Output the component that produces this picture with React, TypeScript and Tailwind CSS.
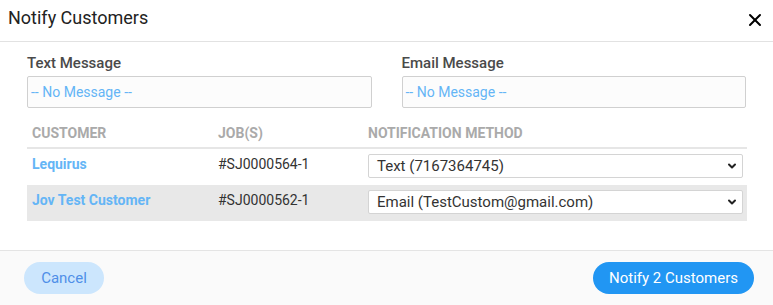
import { X, ChevronDown } from "lucide-react";

interface Row {
  customer: string;
  job: string;
  method: string;
}

const rows: Row[] = [
  { customer: "Lequirus", job: "#SJ0000564-1", method: "Text (7167364745)" },
  { customer: "Jov Test Customer", job: "#SJ0000562-1", method: "Email (TestCustom@gmail.com)" },
];

function MessageField({ label }: { label: string }) {
  return (
    <div className="flex flex-col">
      <span className="text-[15px] leading-[20px] font-medium text-[#4a4a4a]">{label}</span>
      <div className="mt-[3px] h-[32px] rounded-[2px] border border-[#d0d0d0] bg-[#fcfcfc] px-[3px] flex items-center text-[14px] text-[#64b5f6]">
        -- No Message --
      </div>
    </div>
  );
}

export default function App() {
  return (
    <div className="w-[773px] h-[305px] bg-white flex flex-col font-['Roboto',sans-serif] text-[#333]">
      <div className="h-[42px] shrink-0 border-b border-[#e2e2e2] flex items-center justify-between pl-[8px] pr-[8px]">
        <h1 className="text-[18px] text-[#222] leading-none -mt-[6px]">Notify Customers</h1>
        <X className="w-[20px] h-[20px] -mt-[2px] text-black" strokeWidth={2.4} />
      </div>

      <div className="flex-1 px-[27px] pt-[11px]">
        <div className="grid grid-cols-2 gap-[30px]">
          <MessageField label="Text Message" />
          <MessageField label="Email Message" />
        </div>

        <div className="mt-[11px] mr-[-1px]">
          <div className="grid grid-cols-[186px_150px_1fr] h-[30px] border-b-2 border-[#e6e6e6] items-center text-[14px] font-bold text-[#aaa]">
            <span className="pl-[5px]">CUSTOMER</span>
            <span className="pl-[5px]">JOB(S)</span>
            <span className="pl-[5px]">NOTIFICATION METHOD</span>
          </div>
          {rows.map((r, i) => (
            <div
              key={r.job}
              className={`grid grid-cols-[186px_150px_1fr] h-[36px] text-[14px] ${i % 2 === 1 ? "bg-[#e8e8e8]" : "bg-white"}`}
            >
              <span className="pl-[5px] pt-[5px] font-bold text-[#64b5f6]">{r.customer}</span>
              <span className="pl-[5px] pt-[5px] text-[#333]">{r.job}</span>
              <div className="pl-[5px] pr-[4px] pt-[5px]">
                <div className="h-[24px] border border-[#d4d4d4] rounded-[2px] bg-white flex items-center justify-between pl-[8px] pr-[4px] text-[15px] text-[#333]">
                  <span>{r.method}</span>
                  <ChevronDown className="w-[12px] h-[12px] text-[#222]" strokeWidth={4} />
                </div>
              </div>
            </div>
          ))}
        </div>
      </div>

      <div className="h-[55px] shrink-0 border-t border-[#e4e4e4] bg-[#fafafa] flex items-center justify-between pr-[19px] pl-[24px]">
        <button className="h-[32px] w-[80px] rounded-full bg-[#cce6fd] text-[15px] text-[#4f8fe8]">Cancel</button>
        <button className="h-[32px] px-[16px] rounded-full bg-[#2196f3] text-[15px] text-white">Notify 2 Customers</button>
      </div>
    </div>
  );
}
